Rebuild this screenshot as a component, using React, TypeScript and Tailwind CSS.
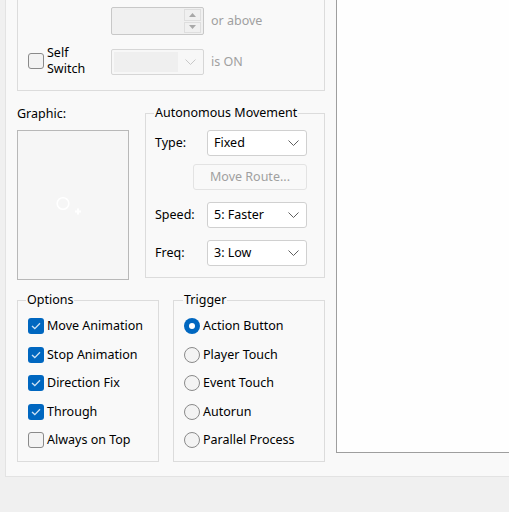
import React from "react";

function Chevron({ muted }: { muted?: boolean }) {
  return (
    <svg width="11" height="6" viewBox="0 0 11 6" className={muted ? "text-[#c8c8c8]" : "text-[#5f5f5f]"}>
      <path d="M0.5 0.5 L5.5 5.5 L10.5 0.5" fill="none" stroke="currentColor" strokeWidth="1" />
    </svg>
  );
}

function Select({ value }: { value: string }) {
  return (
    <div className="flex items-center justify-between w-[100px] h-[26px] bg-white border border-[#d0d0d0] rounded-[3px] pl-[6px] pr-[7px] text-black">
      <span>{value}</span>
      <Chevron />
    </div>
  );
}

function Check({ checked, label }: { checked?: boolean; label: string }) {
  return (
    <div className="flex items-center h-[28.5px]">
      {checked ? (
        <div className="w-[16px] h-[16px] rounded-[3px] bg-[#0067c0] flex items-center justify-center">
          <svg width="10" height="8" viewBox="0 0 10 8">
            <path d="M1 4 L3.8 6.6 L9 1.2" fill="none" stroke="#cfe3f5" strokeWidth="1.3" />
          </svg>
        </div>
      ) : (
        <div className="w-[16px] h-[16px] rounded-[3px] bg-[#f3f3f3] border border-[#8a8a8a]" />
      )}
      <span className="ml-[3px]">{label}</span>
    </div>
  );
}

function Radio({ checked, label }: { checked?: boolean; label: string }) {
  return (
    <div className="flex items-center h-[28.5px]">
      {checked ? (
        <div className="w-[16px] h-[16px] rounded-full bg-[#0067c0] flex items-center justify-center">
          <div className="w-[6px] h-[6px] rounded-full bg-white" />
        </div>
      ) : (
        <div className="w-[16px] h-[16px] rounded-full bg-[#f3f3f3] border border-[#8a8a8a]" />
      )}
      <span className="ml-[3px]">{label}</span>
    </div>
  );
}

export default function App() {
  return (
    <div className="w-[509px] h-[512px] overflow-hidden bg-[#f0f0f0] font-['Noto_Sans',sans-serif] text-[12.5px] leading-[16px] text-black">
      <div className="ml-[5px] h-[477px] border-l border-b border-[#e3e3e3] bg-[#f9f9f9] flex gap-[11px] pl-[11px]">
        {/* left column */}
        <div className="w-[308px] shrink-0 flex flex-col">
          {/* conditions box (top cut off) */}
          <div className="mt-[-10px] h-[101px] border border-[#dcdcdc] pt-[16px] pl-[10px]">
            <div className="flex items-center h-[28px]">
              <div className="w-[83px]" />
              <div className="flex w-[93px] h-[28px] border border-[#c8c8c8] bg-[#f0f0f0] rounded-[2px]">
                <div className="flex-1" />
                <div className="w-[19px] flex flex-col gap-[1px] p-[1px] mr-[1px]">
                  <div className="flex-1 border border-[#dedede] flex items-center justify-center">
                    <svg width="7" height="4" viewBox="0 0 7 4"><path d="M0 4 L3.5 0 L7 4 Z" fill="#a8a8a8" /></svg>
                  </div>
                  <div className="flex-1 border border-[#dedede] flex items-center justify-center">
                    <svg width="7" height="4" viewBox="0 0 7 4"><path d="M0 0 L3.5 4 L7 0 Z" fill="#a8a8a8" /></svg>
                  </div>
                </div>
              </div>
              <span className="ml-[7px] text-[#a0a0a0]">or above</span>
            </div>
            <div className="flex items-center h-[26px] mt-[14px]">
              <div className="w-[83px] flex items-center">
                <div className="w-[16px] h-[16px] rounded-[3px] bg-[#f3f3f3] border border-[#8a8a8a] -mt-[3px]" />
                <div className="ml-[3px] leading-[16px] -mt-[3px]">
                  <div>Self</div>
                  <div>Switch</div>
                </div>
              </div>
              <div className="flex items-center w-[93px] h-[26px] border border-[#d6d6d6] bg-[#f7f7f7] rounded-[2px] pr-[7px]">
                <div className="w-[64px] h-[20px] ml-[2px] bg-[#efefef]" />
                <div className="flex-1" />
                <Chevron muted />
              </div>
              <span className="ml-[7px] text-[#a0a0a0]">is ON</span>
            </div>
          </div>

          {/* graphic + autonomous movement */}
          <div className="flex mt-[14px] gap-[16px]">
            <div className="w-[112px] shrink-0">
              <div className="mt-[1px]">Graphic:</div>
              <div className="mt-[8px] h-[150px] border border-[#b8b8b8] bg-[#f6f6f6] flex items-center justify-center">
                <svg width="40" height="30" viewBox="0 0 40 30">
                  <circle cx="10" cy="13.5" r="5.8" fill="none" stroke="#ffffff" strokeWidth="1.6" />
                  <path d="M25 18.5 V24.5 M22 21.5 H28" stroke="#ffffff" strokeWidth="2" />
                </svg>
              </div>
            </div>
            <fieldset className="w-[180px] h-[173px] border border-[#dcdcdc] pl-[9px]">
              <legend className="ml-[-1px] px-[1px]">Autonomous Movement</legend>
              <div className="flex items-center mt-[9px]">
                <span className="w-[52px]">Type:</span>
                <Select value="Fixed" />
              </div>
              <div className="mt-[8px] ml-[38px] w-[114px] h-[26px] border border-[#e3e3e3] rounded-[3px] bg-[#f9f9f9] flex items-center justify-center text-[#a0a0a0]">
                Move Route...
              </div>
              <div className="flex items-center mt-[12px]">
                <span className="w-[52px]">Speed:</span>
                <Select value="5: Faster" />
              </div>
              <div className="flex items-center mt-[12px]">
                <span className="w-[52px]">Freq:</span>
                <Select value="3: Low" />
              </div>
            </fieldset>
          </div>

          {/* options + trigger */}
          <div className="flex mt-[12px] gap-[14px]">
            <fieldset className="w-[143px] h-[170px] border border-[#dcdcdc] pl-[10px]">
              <legend className="ml-[-2px] px-[1px]">Options</legend>
              <div className="mt-[4px]">
                <Check checked label="Move Animation" />
                <Check checked label="Stop Animation" />
                <Check checked label="Direction Fix" />
                <Check checked label="Through" />
                <Check label="Always on Top" />
              </div>
            </fieldset>
            <fieldset className="w-[153px] h-[170px] border border-[#dcdcdc] pl-[10px]">
              <legend className="ml-[-1px] px-[1px]">Trigger</legend>
              <div className="mt-[4px]">
                <Radio checked label="Action Button" />
                <Radio label="Player Touch" />
                <Radio label="Event Touch" />
                <Radio label="Autorun" />
                <Radio label="Parallel Process" />
              </div>
            </fieldset>
          </div>
        </div>

        {/* right white list area */}
        <div className="flex-1 mt-[-10px] h-[463px] border-l border-b border-[#9e9e9e] bg-[#fefefe]" />
      </div>
    </div>
  );
}
